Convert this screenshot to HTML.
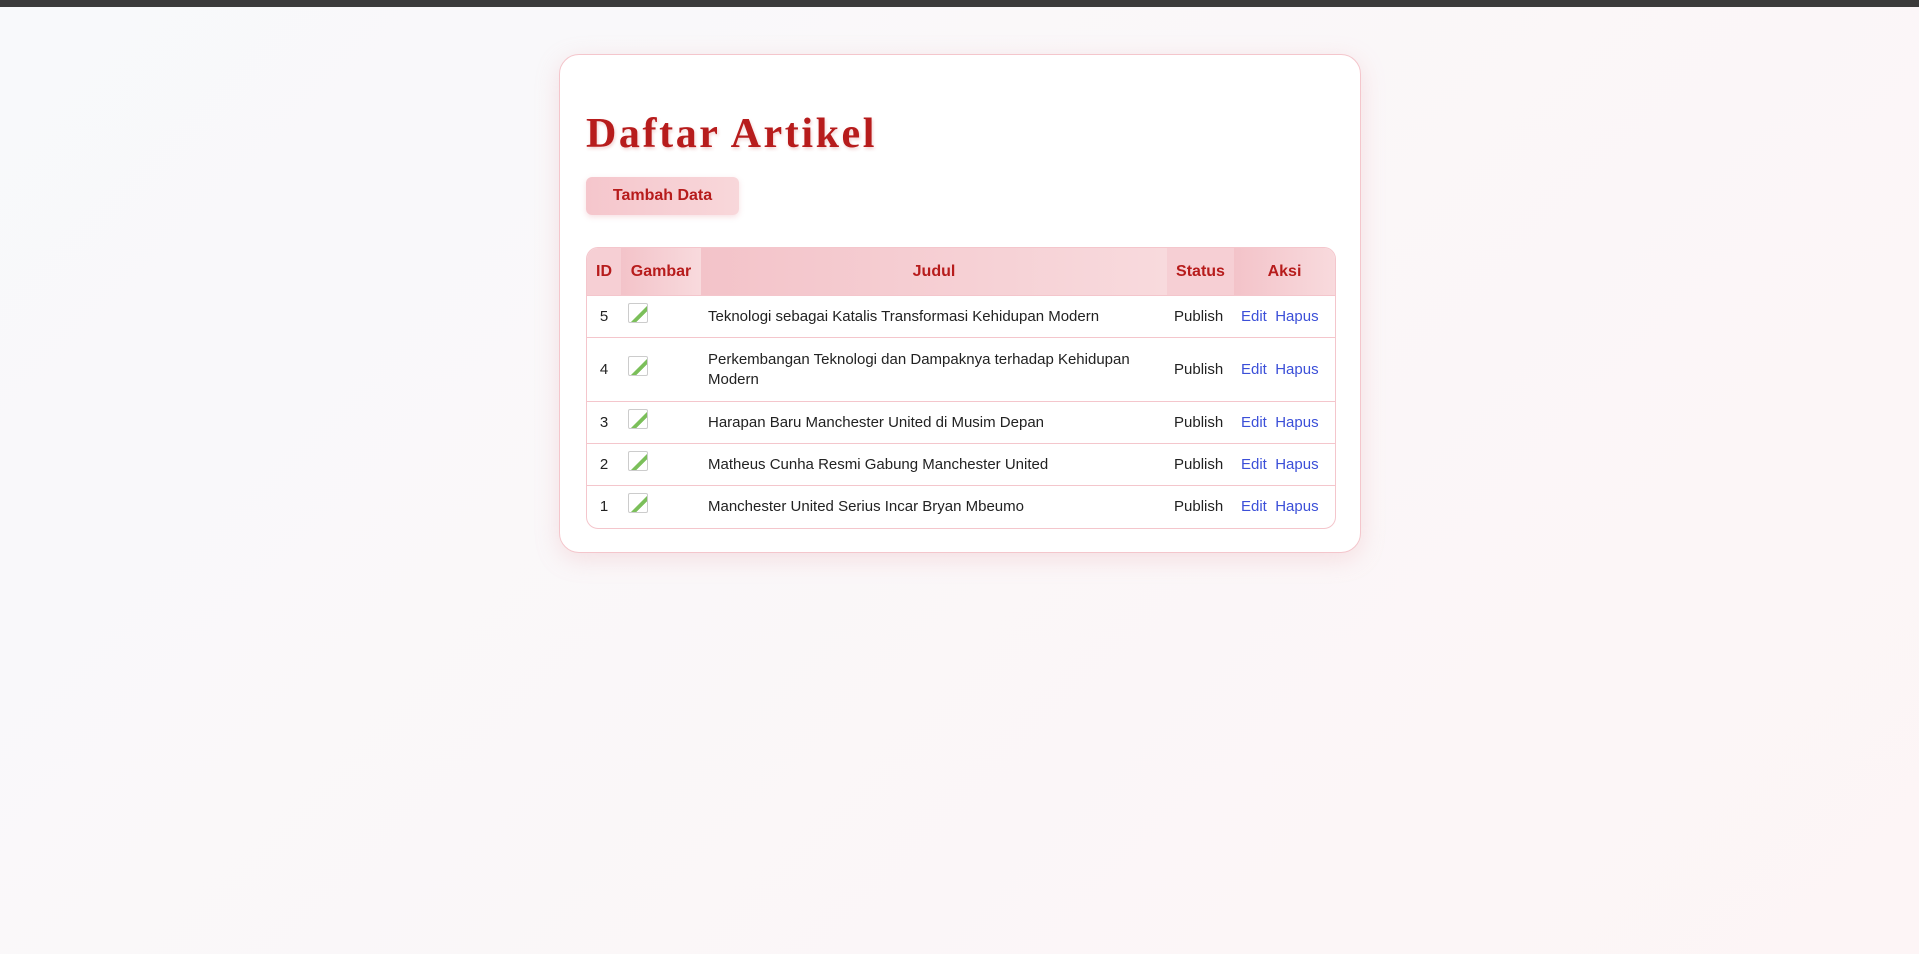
<!DOCTYPE html>
<html><head><meta charset="utf-8"><style>
html,body{margin:0;padding:0}
body{width:1919px;height:954px;background:linear-gradient(135deg,#f8f9fb,#fdf5f6);font-family:"Liberation Sans",sans-serif;position:relative;overflow:hidden}
.bar{position:absolute;left:0;top:0;width:1919px;height:7px;background:#3b3b3b}
.card{position:absolute;left:559px;top:54px;width:800px;height:497px;background:#fff;border:1px solid #f4c6cc;border-radius:20px;box-shadow:0 6px 24px rgba(230,150,160,.25)}
h1{position:absolute;left:26px;top:55px;margin:0;font-family:"Liberation Serif",serif;font-size:42px;font-weight:bold;color:#b71c1c;text-shadow:1px 2px 3px rgba(183,28,28,.2);letter-spacing:2.6px}
.btn{position:absolute;left:26px;top:122px;width:153px;height:38px;background:linear-gradient(90deg,#f5c6cc,#f8d7da);border-radius:6px;color:#b71c1c;font-weight:bold;font-size:16px;line-height:38px;text-align:center;box-shadow:0 2px 6px rgba(230,150,160,.3)}
.tw{position:absolute;left:26px;top:192px;width:748px;border:1px solid #f4c6cc;border-radius:12px;overflow:hidden}
table{border-collapse:collapse;width:748px;table-layout:fixed;font-size:15px;color:#222}
th{height:47px;background:linear-gradient(90deg,#f3c3c9,#f8dadd);color:#b71c1c;font-size:16px;font-weight:bold;padding:0}
th.a{background:#f6cfd4}
td{border-top:1px solid #f4c6cc;padding:8px 7px;vertical-align:middle;line-height:20px}
td.id{text-align:center;padding:0}
.img{display:inline-block;width:18px;height:18px;border:1px solid #ccc;border-radius:2px;vertical-align:middle;margin-top:-8px;background:linear-gradient(135deg,#fff 55%,#7bbf5a 56%,#7bbf5a 70%,#fff 71%)}
a{color:#3b4fd8;text-decoration:none}
</style></head><body>
<div class="bar"></div>
<div class="card">
<h1>Daftar Artikel</h1>
<div class="btn">Tambah Data</div>
<div class="tw"><table>
<colgroup><col style="width:34px"><col style="width:80px"><col style="width:466px"><col style="width:67px"><col style="width:101px"></colgroup>
<tr><th class="a">ID</th><th>Gambar</th><th>Judul</th><th class="a">Status</th><th>Aksi</th></tr>
<tr style="height:42px"><td class="id">5</td><td><span class="img"></span></td><td>Teknologi sebagai Katalis Transformasi Kehidupan Modern</td><td>Publish</td><td><a>Edit</a>&nbsp; <a>Hapus</a></td></tr>
<tr style="height:64px"><td class="id">4</td><td><span class="img"></span></td><td>Perkembangan Teknologi dan Dampaknya terhadap Kehidupan Modern</td><td>Publish</td><td><a>Edit</a>&nbsp; <a>Hapus</a></td></tr>
<tr style="height:42px"><td class="id">3</td><td><span class="img"></span></td><td>Harapan Baru Manchester United di Musim Depan</td><td>Publish</td><td><a>Edit</a>&nbsp; <a>Hapus</a></td></tr>
<tr style="height:42px"><td class="id">2</td><td><span class="img"></span></td><td>Matheus Cunha Resmi Gabung Manchester United</td><td>Publish</td><td><a>Edit</a>&nbsp; <a>Hapus</a></td></tr>
<tr style="height:42px"><td class="id">1</td><td><span class="img"></span></td><td>Manchester United Serius Incar Bryan Mbeumo</td><td>Publish</td><td><a>Edit</a>&nbsp; <a>Hapus</a></td></tr>
</table></div>
</div>
</body></html>
